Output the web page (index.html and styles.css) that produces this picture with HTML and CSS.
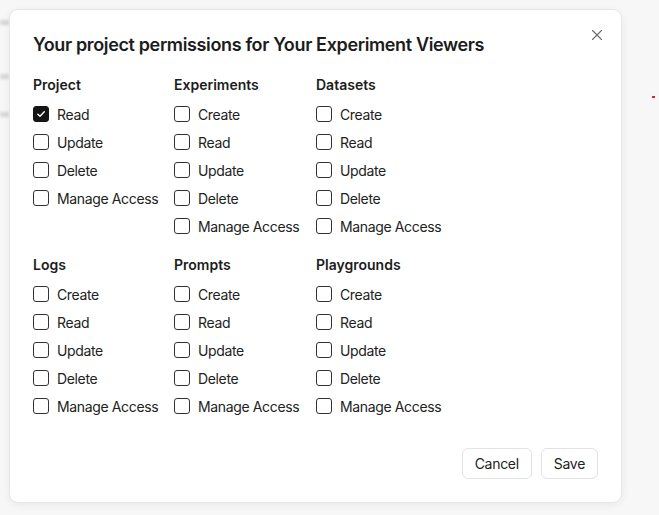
FILE: index.html
```html
<!DOCTYPE html>
<html>
<head>
<meta charset="utf-8">
<link rel="stylesheet" href="styles.css">
</head>
<body>
<div class="backdrop">
  <span class="smudge s1"></span>
  <span class="smudge s2"></span>
  <span class="smudge s3"></span>
  <div class="dialog">
    <button class="close" aria-label="Close">
      <svg width="12" height="12" viewBox="0 0 12 12"><path d="M1.5 1.5L10.5 10.5M10.5 1.5L1.5 10.5" stroke="#6b6b6b" stroke-width="1.1" fill="none" stroke-linecap="round"/></svg>
    </button>
    <h2 class="title">Your project permissions for Your Experiment Viewers</h2>
    <div class="grid">
      <div class="group">
        <div class="heading">Project</div>
        <label class="row"><span class="box checked"><svg width="10" height="10" viewBox="0 0 10 10"><path d="M1.8 5.2L4 7.3L8.3 2.8" stroke="#fff" stroke-width="1.4" fill="none" stroke-linecap="round" stroke-linejoin="round"/></svg></span>Read</label>
        <label class="row"><span class="box"></span>Update</label>
        <label class="row"><span class="box"></span>Delete</label>
        <label class="row"><span class="box"></span>Manage Access</label>
      </div>
      <div class="group">
        <div class="heading">Experiments</div>
        <label class="row"><span class="box"></span>Create</label>
        <label class="row"><span class="box"></span>Read</label>
        <label class="row"><span class="box"></span>Update</label>
        <label class="row"><span class="box"></span>Delete</label>
        <label class="row"><span class="box"></span>Manage Access</label>
      </div>
      <div class="group">
        <div class="heading">Datasets</div>
        <label class="row"><span class="box"></span>Create</label>
        <label class="row"><span class="box"></span>Read</label>
        <label class="row"><span class="box"></span>Update</label>
        <label class="row"><span class="box"></span>Delete</label>
        <label class="row"><span class="box"></span>Manage Access</label>
      </div>
      <div class="group">
        <div class="heading">Logs</div>
        <label class="row"><span class="box"></span>Create</label>
        <label class="row"><span class="box"></span>Read</label>
        <label class="row"><span class="box"></span>Update</label>
        <label class="row"><span class="box"></span>Delete</label>
        <label class="row"><span class="box"></span>Manage Access</label>
      </div>
      <div class="group">
        <div class="heading">Prompts</div>
        <label class="row"><span class="box"></span>Create</label>
        <label class="row"><span class="box"></span>Read</label>
        <label class="row"><span class="box"></span>Update</label>
        <label class="row"><span class="box"></span>Delete</label>
        <label class="row"><span class="box"></span>Manage Access</label>
      </div>
      <div class="group">
        <div class="heading">Playgrounds</div>
        <label class="row"><span class="box"></span>Create</label>
        <label class="row"><span class="box"></span>Read</label>
        <label class="row"><span class="box"></span>Update</label>
        <label class="row"><span class="box"></span>Delete</label>
        <label class="row"><span class="box"></span>Manage Access</label>
      </div>
    </div>
    <div class="footer">
      <button class="btn">Cancel</button>
      <button class="btn">Save</button>
    </div>
  </div>
  <span class="mark"></span>
</div>
</body>
</html>
```
FILE: styles.css
```css
* { box-sizing: border-box; }
html, body { margin: 0; padding: 0; }
body {
  width: 659px;
  height: 515px;
  background: #f7f7f7;
  font-family: Inter, "Noto Sans", sans-serif;
  color: #1c1c1c;
  overflow: hidden;
}
.backdrop {
  position: relative;
  padding: 9px 0 0 9px;
  height: 515px;
}
.smudge {
  position: absolute;
  left: 0;
  width: 9px;
  height: 5px;
  background: #d6d6d6;
  filter: blur(1.5px);
}
.s1 { top: 20px; }
.s2 { top: 74px; }
.s3 { top: 112px; }
.dialog {
  position: relative;
  width: 613px;
  height: 494px;
  background: #fff;
  border: 1px solid #e6e6e6;
  border-radius: 9px;
  box-shadow: 0 2px 8px rgba(0,0,0,0.06);
  padding: 21px 23px 23px 23px;
  display: flex;
  flex-direction: column;
}
.close {
  position: absolute;
  top: 18px;
  right: 17px;
  width: 14px;
  height: 14px;
  padding: 0;
  border: none;
  background: none;
  display: flex;
  align-items: center;
  justify-content: center;
}
.title {
  margin: 0 0 16px 0;
  font-size: 18px;
  line-height: 28px;
  font-weight: 600;
  letter-spacing: -0.36px;
}
.grid {
  display: grid;
  grid-template-columns: 141px 142px 142px;
  row-gap: 15px;
}
.heading {
  font-size: 14px;
  line-height: 20px;
  font-weight: 600;
  margin-bottom: 5px;
}
.row {
  display: flex;
  align-items: center;
  gap: 8px;
  height: 28px;
  font-size: 14px;
  letter-spacing: -0.36px;
  color: #222;
  white-space: nowrap;
}
.box {
  width: 16px;
  height: 16px;
  border: 1px solid #333;
  border-radius: 3px;
  flex: none;
  display: flex;
  align-items: center;
  justify-content: center;
}
.box.checked {
  background: #151515;
  border-color: #151515;
}
.footer {
  margin-top: auto;
  display: flex;
  justify-content: flex-end;
  gap: 9px;
}
.btn {
  height: 31px;
  padding: 0 12px;
  font-family: inherit;
  font-size: 14px;
  letter-spacing: -0.3px;
  color: #222;
  background: #fff;
  border: 1px solid #e3e3e3;
  border-radius: 6px;
}
.mark {
  position: absolute;
  left: 652px;
  top: 96px;
  width: 3px;
  height: 2px;
  background: #e52020;
}
```
